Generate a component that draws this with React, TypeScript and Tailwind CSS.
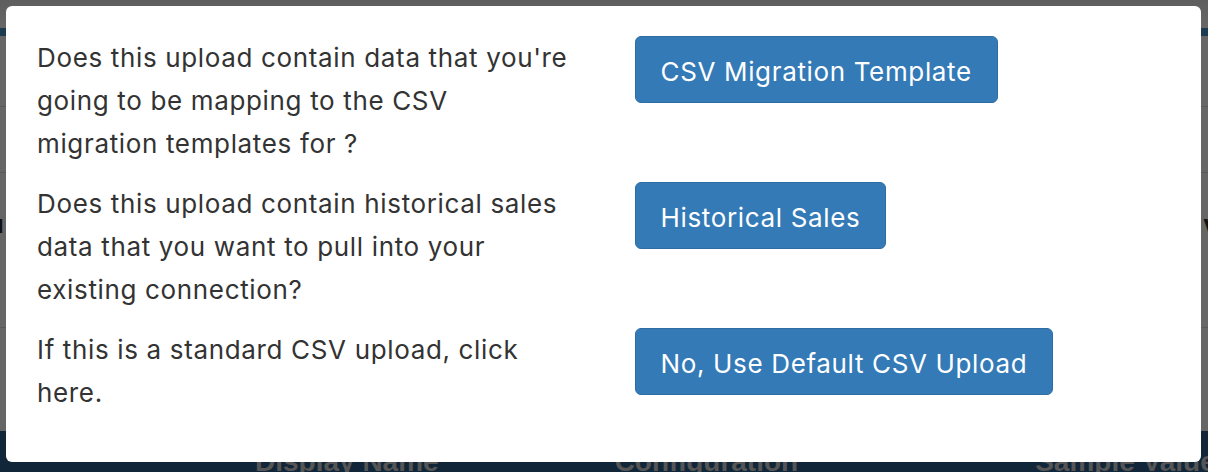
import React from 'react';

const rows = [
  {
    text: "Does this upload contain data that you're going to be mapping to the CSV migration templates for ?",
    label: 'CSV Migration Template',
  },
  {
    text: 'Does this upload contain historical sales data that you want to pull into your existing connection?',
    label: 'Historical Sales',
  },
  {
    text: 'If this is a standard CSV upload, click here.',
    label: 'No, Use Default CSV Upload',
  },
];

const Backdrop: React.FC = () => (
  <div className="flex h-full flex-col bg-[#666666]">
    <div className="h-[28px] shrink-0 bg-gradient-to-b from-[#5e5e5e] to-[#676767]" />
    <div className="h-[8px] shrink-0 bg-[#1c3b50]" />
    <div className="h-[71px] shrink-0 border-b border-[#595959]" />
    <div className="h-[66px] shrink-0 border-b border-[#595959]" />
    <div className="flex h-[155px] shrink-0 items-start justify-between border-b border-[#595959] pt-[38px] font-['Liberation_Sans',sans-serif] text-[26px] font-bold leading-none text-[#111]">
      <span className="-ml-[12px]">u</span>
      <span className="-mr-[10px]">v</span>
    </div>
    <div className="h-[103px] shrink-0" />
    <div className="flex flex-1 items-end whitespace-nowrap bg-[#12263a] font-['Liberation_Sans',sans-serif] text-[28px] font-bold leading-none text-[#555]">
      <span className="ml-[255px] translate-y-[4px]">Display Name</span>
      <span className="ml-[176px] translate-y-[4px]">Configuration</span>
      <span className="ml-[237px] translate-y-[4px]">Sample Value</span>
    </div>
  </div>
);

const App: React.FC = () => {
  return (
    <div className="relative h-[472px] w-[1208px] overflow-hidden">
      <Backdrop />
      <div className="absolute left-[6px] top-[6px] h-[456px] w-[1195px] rounded-[6px] bg-white px-[31px] pt-[30px] font-['Inter',sans-serif] text-[26px] leading-[43px] tracking-[0.65px] text-[#333]">
        {rows.map((r) => (
          <div key={r.label} className="mb-[17px] grid grid-cols-2 gap-x-[62px]">
            <p>{r.text}</p>
            <div>
              <button className="h-[67px] rounded-[6px] border border-[#2e6da4] bg-[#337ab7] px-[25px] pt-[3px] text-white">
                {r.label}
              </button>
            </div>
          </div>
        ))}
      </div>
    </div>
  );
};

export default App;
